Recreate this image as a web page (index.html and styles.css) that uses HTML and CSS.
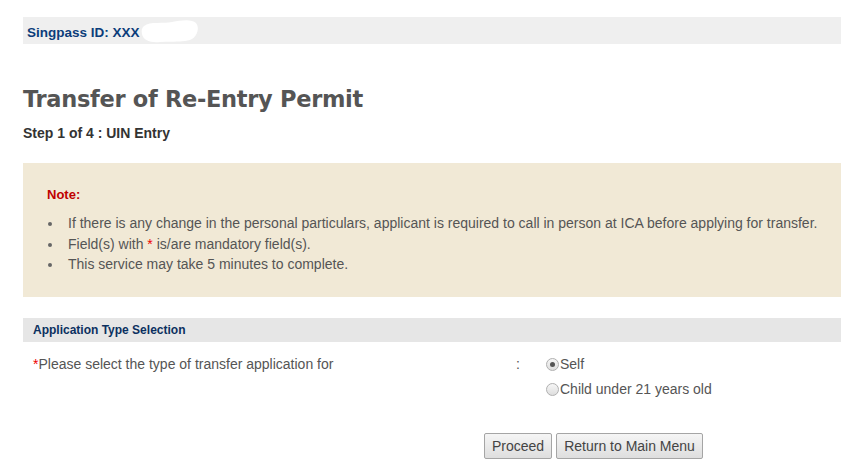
FILE: index.html
```html
<!DOCTYPE html>
<html>
<head>
<meta charset="utf-8">
<link rel="stylesheet" href="styles.css">
</head>
<body>
<div class="page">
  <div class="idbar">
    <span class="idtext">Singpass ID: XXX</span>
    <svg class="redact" width="60" height="26" viewBox="0 0 60 26"><path d="M4 8 C10 3 24 6 32 4 C42 2 52 1 56 5 C60 10 57 18 52 21 C44 25 30 23 20 24 C10 25 3 22 2 16 C1 12 2 10 4 8 Z" fill="#fff"/></svg>
  </div>
  <h1 class="title">Transfer of Re-Entry Permit</h1>
  <div class="step">Step 1 of 4 : UIN Entry</div>
  <div class="note">
    <div class="note-title">Note:</div>
    <ul class="note-list">
      <li>If there is any change in the personal particulars, applicant is required to call in person at ICA before applying for transfer.</li>
      <li>Field(s) with <span class="req">*</span> is/are mandatory field(s).</li>
      <li>This service may take 5 minutes to complete.</li>
    </ul>
  </div>
  <div class="section-head">Application Type Selection</div>
  <div class="form-row">
    <div class="label"><span class="req">*</span>Please select the type of transfer application for</div>
    <div class="colon">:</div>
    <div class="options">
      <label class="opt"><span class="radio checked"></span>Self</label>
      <label class="opt"><span class="radio"></span>Child under 21 years old</label>
    </div>
  </div>
  <div class="buttons">
    <button class="btn">Proceed</button>
    <button class="btn">Return to Main Menu</button>
  </div>
</div>
</body>
</html>
```
FILE: styles.css
```css
html, body { margin: 0; padding: 0; background: #fff; }
body { font-family: "Liberation Sans", Arial, sans-serif; color: #555; }
.page { padding: 17px 0 0 23px; }
.idbar {
  position: relative;
  background: #efefef;
  height: 27px;
  display: flex;
  align-items: center;
  padding-left: 4px;
}
.idtext { color: #0b3d7a; font-weight: bold; font-size: 13.5px; padding-top: 3px; }
.redact { position: absolute; left: 117px; top: 1px; }
.title {
  margin: 40px 0 0 0;
  font-family: "DejaVu Sans", sans-serif;
  font-weight: bold;
  font-size: 22.5px;
  color: #555;
  line-height: 30px;
  letter-spacing: -0.3px;
}
.step { margin-top: 11px; font-weight: bold; font-size: 14px; color: #333; line-height: 16px; }
.note {
  margin-top: 22px;
  background: #f1e9d6;
  height: 134px;
  box-sizing: border-box;
  padding: 24px 0 0 24px;
}
.note-title { color: #c00000; font-weight: bold; font-size: 13px; line-height: 16px; }
.note-list { list-style: none; margin: 10px 0 0 0; padding: 0 0 0 21px; font-size: 14px; line-height: 20.5px; color: #555; }
.note-list li { position: relative; }
.note-list li::before {
  content: ""; position: absolute; left: -20px; top: 9px;
  width: 4px; height: 4px; border-radius: 50%; background: #666;
}
.req { color: #e00; }
.section-head {
  margin-top: 21px;
  background: #e6e6e6;
  height: 24px;
  box-sizing: border-box;
  padding: 5px 0 0 10px;
  color: #0b3060;
  font-weight: bold;
  font-size: 12px;
  line-height: 14px;
}
.form-row { display: flex; padding: 14px 0 0 10px; font-size: 14px; line-height: 16px; }
.label { width: 483px; }
.colon { width: 30px; }
.options { display: flex; flex-direction: column; gap: 9px; }
.opt { display: flex; align-items: center; color: #555; }
.radio {
  width: 13px; height: 13px; border-radius: 50%;
  border: 1px solid #b0b0b0;
  background: linear-gradient(#f6f6f6, #dedede);
  box-sizing: border-box;
  margin-right: 1px;
  position: relative;
}
.radio.checked::after {
  content: ""; position: absolute; left: 3px; top: 3px;
  width: 5px; height: 5px; border-radius: 50%; background: #555;
}
.buttons { display: flex; gap: 4px; padding: 36px 0 0 461px; }
.btn {
  font-family: "Liberation Sans", Arial, sans-serif;
  font-size: 14px;
  color: #444;
  background: linear-gradient(#f5f5f5, #dedede);
  border: 1px solid #a5a5a5;
  border-radius: 2px;
  height: 26px;
  padding: 0 7px;
}
```
